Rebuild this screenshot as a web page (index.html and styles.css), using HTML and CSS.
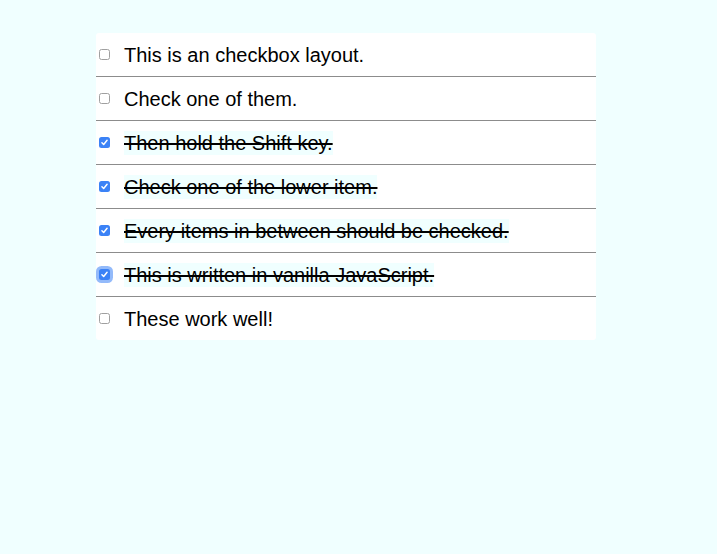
FILE: index.html
```html
<!DOCTYPE html>
<html lang="en">
<head>
<meta charset="utf-8">
<title>Checkboxes</title>
<link rel="stylesheet" href="styles.css">
</head>
<body>
<div class="inbox">
  <label class="item">
    <span class="box"></span>
    <span class="text">This is an checkbox layout.</span>
  </label>
  <label class="item">
    <span class="box"></span>
    <span class="text">Check one of them.</span>
  </label>
  <label class="item checked">
    <span class="box"><svg viewBox="0 0 12 12" width="11" height="11"><path d="M3.2 6.2 L5.1 8.1 L8.8 3.6" fill="none" stroke="#fff" stroke-width="1.6" stroke-linecap="round" stroke-linejoin="round"/></svg></span>
    <span class="text">Then hold the Shift key.</span>
  </label>
  <label class="item checked">
    <span class="box"><svg viewBox="0 0 12 12" width="11" height="11"><path d="M3.2 6.2 L5.1 8.1 L8.8 3.6" fill="none" stroke="#fff" stroke-width="1.6" stroke-linecap="round" stroke-linejoin="round"/></svg></span>
    <span class="text">Check one of the lower item.</span>
  </label>
  <label class="item checked">
    <span class="box"><svg viewBox="0 0 12 12" width="11" height="11"><path d="M3.2 6.2 L5.1 8.1 L8.8 3.6" fill="none" stroke="#fff" stroke-width="1.6" stroke-linecap="round" stroke-linejoin="round"/></svg></span>
    <span class="text">Every items in between should be checked.</span>
  </label>
  <label class="item checked focused">
    <span class="box"><svg viewBox="0 0 12 12" width="11" height="11"><path d="M3.2 6.2 L5.1 8.1 L8.8 3.6" fill="none" stroke="#fff" stroke-width="1.6" stroke-linecap="round" stroke-linejoin="round"/></svg></span>
    <span class="text">This is written in vanilla JavaScript.</span>
  </label>
  <label class="item">
    <span class="box"></span>
    <span class="text">These work well!</span>
  </label>
</div>
</body>
</html>
```
FILE: styles.css
```css
html {
  background: #f0ffff;
}
body {
  margin: 33px 0 0 96px;
  font-family: "Liberation Sans", Arial, sans-serif;
}
.inbox {
  width: 500px;
  background: #ffffff;
  border-radius: 3px;
}
.item {
  display: flex;
  align-items: center;
  height: 43px;
  border-bottom: 1px solid #8c8c8c;
}
.item:last-child {
  border-bottom: 0;
}
.box {
  box-sizing: border-box;
  width: 11px;
  height: 11px;
  margin: 0 14px 0 3px;
  border: 1px solid #a0a0a0;
  border-radius: 2.5px;
  background: #fff;
  display: flex;
  align-items: center;
  justify-content: center;
  flex: none;
}
.item.checked .box {
  border: 0;
  background: #3b82f6;
}
.item.focused .box {
  box-shadow: 0 0 0 3px rgba(59, 130, 246, 0.55);
}
.box svg {
  display: block;
}
.text {
  font-size: 20px;
  line-height: 24px;
  color: #000;
}
.item.checked .text {
  background: #f0ffff;
  text-decoration: line-through;
  text-decoration-thickness: 2px;
}
```
